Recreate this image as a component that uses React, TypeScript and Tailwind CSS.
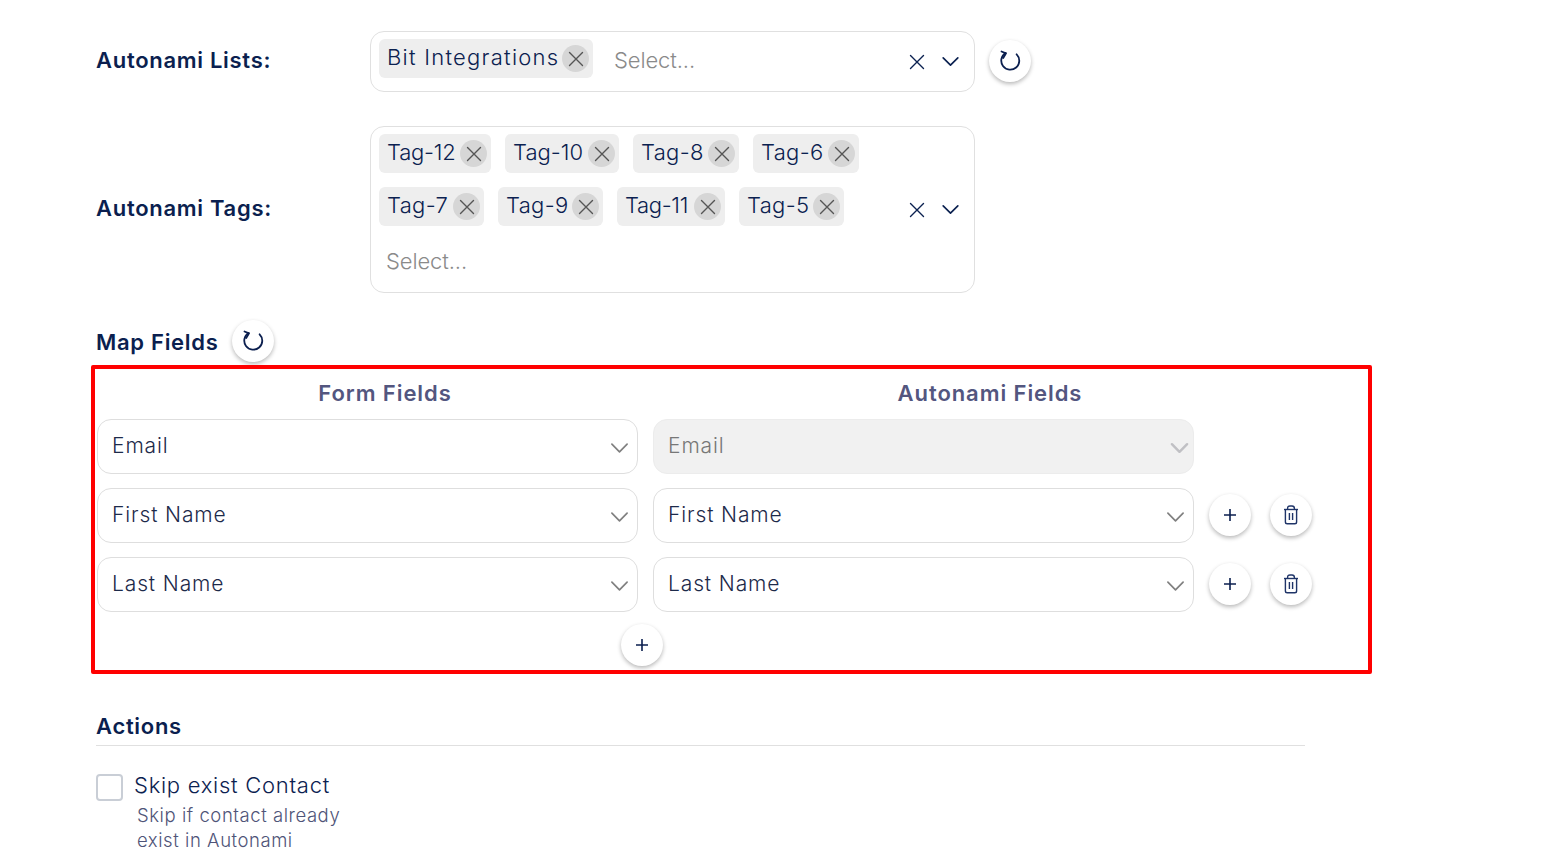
const font = "[font-family:Inter,'Liberation_Sans',sans-serif]";

function XIcon({ className = "" }: { className?: string }) {
  return (
    <svg viewBox="0 0 16 16" className={className} fill="none" stroke="currentColor" strokeWidth="1.4" strokeLinecap="round">
      <path d="M1.5 1.5 L14.5 14.5 M14.5 1.5 L1.5 14.5" />
    </svg>
  );
}

function Chevron({ className = "", thick = false }: { className?: string; thick?: boolean }) {
  return (
    <svg viewBox="0 0 20 12" className={className} fill="none" stroke="currentColor" strokeWidth={thick ? 2.6 : 1.8} strokeLinecap="round" strokeLinejoin="round">
      <path d="M2 2 L10 10 L18 2" />
    </svg>
  );
}

function Refresh() {
  return (
    <svg viewBox="0 0 24 24" className="w-[24px] h-[24px] text-[#0b1f4f]" fill="none" stroke="currentColor" strokeWidth="1.8" strokeLinecap="round" strokeLinejoin="round">
      <path d="M7.6 4 A9 9 0 1 0 18.6 5.3" />
      <path d="M3.5 2.5 L8 4.4 L5.2 9" />
    </svg>
  );
}

function Plus() {
  return (
    <svg viewBox="0 0 14 14" className="w-[14px] h-[14px] text-[#0b1f4f]" fill="none" stroke="currentColor" strokeWidth="1.6">
      <path d="M7 1 V13 M1 7 H13" />
    </svg>
  );
}

function Trash() {
  return (
    <svg viewBox="0 0 16 20" className="w-[16px] h-[20px] text-[#1f3468]" fill="none" stroke="currentColor" strokeWidth="1.4" strokeLinejoin="round">
      <path d="M1 4.5 H15" />
      <path d="M4.6 4.5 V3.4 Q4.6 1 7 1 H9 Q11.4 1 11.4 3.4 V4.5" />
      <path d="M2.4 4.5 V17 Q2.4 18.8 4.2 18.8 H11.8 Q13.6 18.8 13.6 17 V4.5" />
      <path d="M6.4 8 V15 M9.6 8 V15" />
    </svg>
  );
}

function RoundBtn({ children, className = "" }: { children: React.ReactNode; className?: string }) {
  return (
    <button className={`w-[42px] h-[42px] rounded-full bg-white shadow-[0_2px_4px_rgba(0,0,0,0.28)] flex items-center justify-center shrink-0 ${className}`}>
      {children}
    </button>
  );
}

function Chip({ label, width, tracking = "tracking-[0.015em]" }: { label: string; width: string; tracking?: string }) {
  return (
    <div className={`h-[39px] ${width} bg-[#eeeeee] rounded-[6px] flex items-center justify-between pl-[8px] pr-[4px] shrink-0`}>
      <span className={`text-[22px] font-light ${tracking} text-[#0b2150] leading-none -mt-[3px] whitespace-nowrap`}>{label}</span>
      <span className="w-[27px] h-[27px] rounded-full bg-[#d6d6d6] flex items-center justify-center text-[#555555]">
        <XIcon className="w-[16px] h-[16px]" />
      </span>
    </div>
  );
}

function Indicators() {
  return (
    <div className="absolute right-[14px] top-1/2 -translate-y-1/2 flex items-center gap-[16px] text-[#0b2150]">
      <XIcon className="w-[16px] h-[16px]" />
      <Chevron className="w-[19px] h-[11px]" />
    </div>
  );
}

function FieldSelect({ label, disabled = false }: { label: string; disabled?: boolean }) {
  return (
    <div className={`relative w-[541px] h-[55px] rounded-[14px] border flex items-center pl-[14px] shrink-0 ${disabled ? "bg-[#f1f1f1] border-[#ececec]" : "bg-white border-[#dedede]"}`}>
      <span className={`text-[21px] font-light tracking-[0.042em] -mt-[2px] ${disabled ? "text-[#777777]" : "text-[#1d2a4a]"}`}>{label}</span>
      <Chevron thick={disabled} className={`absolute top-[22px] w-[19px] h-[12px] ${disabled ? "right-[4px] text-[#c0c0c4]" : "right-[8px] text-[#808080]"}`} />
    </div>
  );
}

function MapRow({ label, locked = false }: { label: string; locked?: boolean }) {
  return (
    <div className="flex items-center gap-[15px] h-[55px] mb-[14px]">
      <FieldSelect label={label} />
      <FieldSelect label={label} disabled={locked} />
      {!locked && (
        <div className="flex items-center gap-[19px] -mt-[2px]">
          <RoundBtn><Plus /></RoundBtn>
          <RoundBtn><Trash /></RoundBtn>
        </div>
      )}
    </div>
  );
}

export default function App() {
  return (
    <div className={`relative w-full h-[856px] overflow-hidden bg-white pt-[31px] pl-[96px] ${font}`}>
      <div className="flex items-center h-[61px]">
        <div className="w-[274px] text-[22px] font-semibold tracking-[0.032em] text-[#0b1f4f] -mt-[2px]">Autonami Lists:</div>
        <div className="relative w-[605px] h-[61px] border border-[#e0e0e0] rounded-[14px] pl-[8px] pt-[7px] flex">
          <Chip label="Bit Integrations" width="w-[214px]" tracking="tracking-[0.057em]" />
          <span className="ml-[21px] mt-[5px] text-[22px] font-light tracking-[-0.005em] text-[#8a8a8a]">Select...</span>
          <Indicators />
        </div>
        <RoundBtn className="ml-[14px] -mt-[2px]"><Refresh /></RoundBtn>
      </div>

      <div className="flex items-center h-[167px] mt-[34px]">
        <div className="w-[274px] text-[22px] font-semibold tracking-[0.032em] text-[#0b1f4f] -mt-[2px]">Autonami Tags:</div>
        <div className="relative w-[605px] h-[167px] border border-[#e0e0e0] rounded-[14px] pl-[8px] pt-[7px]">
          <div className="flex gap-[14px] mb-[14px]">
            <Chip label="Tag-12" width="w-[112px]" tracking="tracking-[-0.01em]" />
            <Chip label="Tag-10" width="w-[114px]" tracking="tracking-[0.002em]" />
            <Chip label="Tag-8" width="w-[106px]" />
            <Chip label="Tag-6" width="w-[106px]" />
          </div>
          <div className="flex gap-[14px]">
            <Chip label="Tag-7" width="w-[105px]" />
            <Chip label="Tag-9" width="w-[105px]" />
            <Chip label="Tag-11" width="w-[108px]" tracking="tracking-[-0.015em]" />
            <Chip label="Tag-5" width="w-[105px]" />
          </div>
          <div className="mt-[20px] ml-[7px] text-[22px] font-light tracking-[-0.005em] leading-[30px] text-[#8a8a8a]">Select...</div>
          <Indicators />
        </div>
      </div>

      <div className="flex items-center h-[42px] mt-[27px]">
        <div className="text-[22px] font-semibold tracking-[0.032em] text-[#0b1f4f] w-[136px] mt-[3px]">Map Fields</div>
        <RoundBtn><Refresh /></RoundBtn>
      </div>

      <div className="w-[1209px] border-b border-[#e3e3e3] h-[6px]" />

      <div className="flex h-[51px] items-center text-[22px] font-semibold tracking-[0.042em] text-[#53567f]">
        <div className="w-[578px] text-center">Form Fields</div>
        <div className="w-[632px] text-center">Autonami Fields</div>
      </div>

      <div className="ml-[1px]">
        <MapRow label="Email" locked />
        <MapRow label="First Name" />
        <MapRow label="Last Name" />
      </div>

      <div className="ml-[525px] -mt-[2px]">
        <RoundBtn><Plus /></RoundBtn>
      </div>

      <div className="w-[1209px] mt-[42px] border-b border-[#e0e0e0] pb-[1px]">
        <div className="text-[22px] font-semibold tracking-[0.032em] text-[#0b1f4f] leading-[36px] mt-[1px]">Actions</div>
      </div>

      <div className="flex mt-[28px]">
        <div className="w-[27px] h-[27px] rounded-[4px] border-2 border-[#c9ced6] bg-white shrink-0" />
        <div className="ml-[11px] -mt-[1px]">
          <div className="text-[22px] font-light tracking-[0.033em] text-[#0b2150] leading-[24px]">Skip exist Contact</div>
          <div className="ml-[3px] mt-[6px] text-[18.5px] font-light tracking-[0.03em] leading-[25px] text-[#4f5478] w-[240px]">
            Skip if contact already exist in Autonami
          </div>
        </div>
      </div>

      <div className="absolute left-[91px] top-[365px] w-[1281px] h-[309px] border-[4px] border-[#ff0000] rounded-[2px] pointer-events-none" />
    </div>
  );
}
